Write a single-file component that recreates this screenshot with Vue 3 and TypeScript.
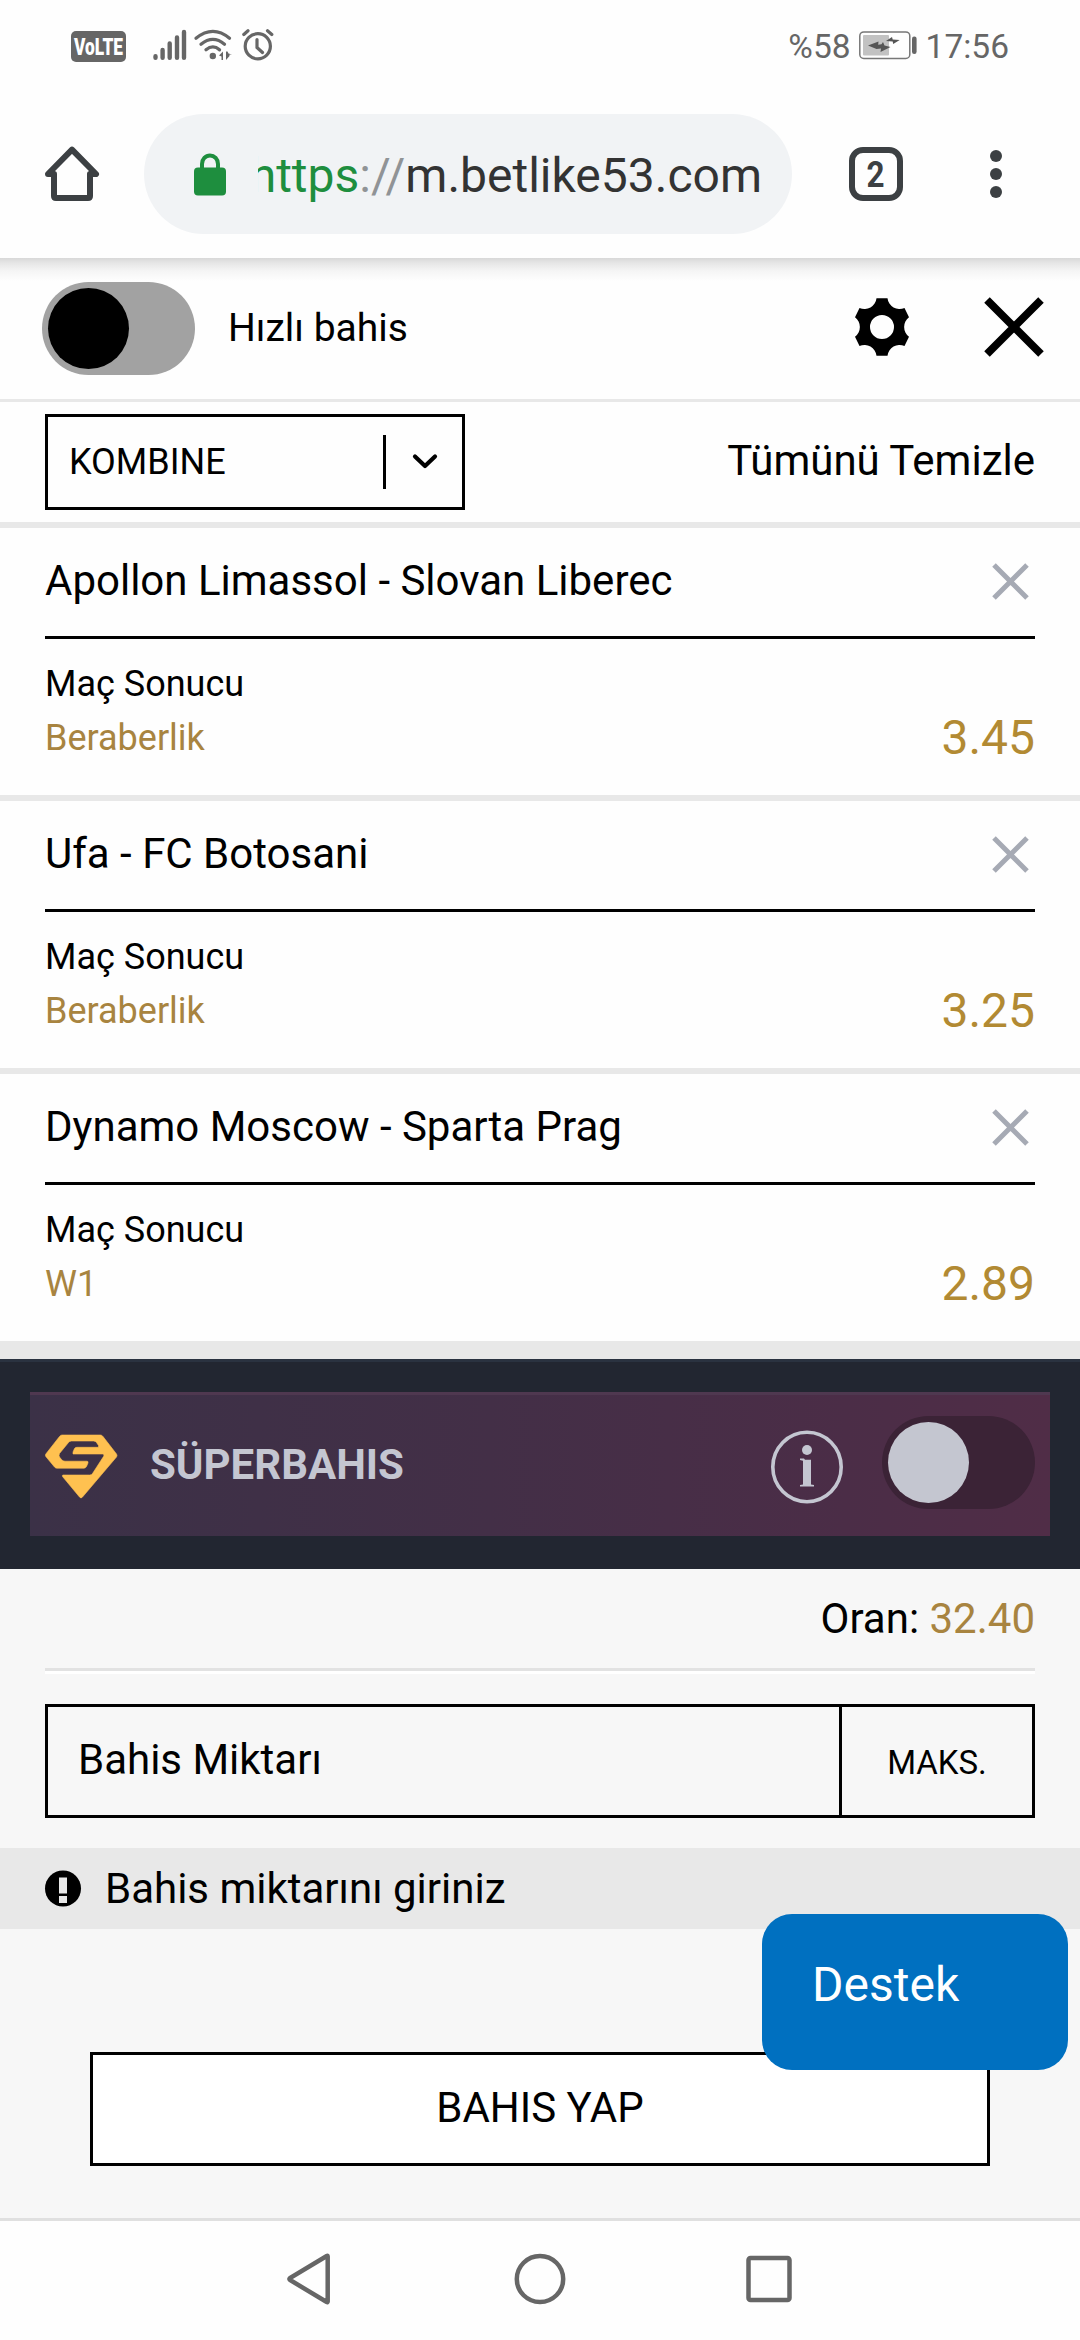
<script setup lang="ts">
import { ref } from 'vue'

interface Selection {
  match: string
  market: string
  pick: string
  odd: string
}

const selections = ref<Selection[]>([
  { match: 'Apollon Limassol - Slovan Liberec', market: 'Maç Sonucu', pick: 'Beraberlik', odd: '3.45' },
  { match: 'Ufa - FC Botosani', market: 'Maç Sonucu', pick: 'Beraberlik', odd: '3.25' },
  { match: 'Dynamo Moscow - Sparta Prag', market: 'Maç Sonucu', pick: 'W1', odd: '2.89' },
])
const totalOdds = ref('32.40')
</script>

<template>
  <div class="screen">
    <header class="status">
      <div class="status-left">
        <svg class="volte" width="55" height="31" viewBox="0 0 55 31">
          <rect width="55" height="31" rx="5" fill="#666" />
          <text x="3" y="23.5" textLength="49" lengthAdjust="spacingAndGlyphs" font-family="Roboto" font-weight="900" font-size="23" fill="#fff">VoLTE</text>
        </svg>
        <svg class="signal" width="34" height="32" viewBox="0 0 34 32" stroke="#666" stroke-width="4.4" stroke-linecap="round">
          <path d="M2.5 27.2v1.6M9.6 21v7.8M16.7 14.5v14.3M24 8.5v20.3M31 3v25.800" />
        </svg>
        <svg class="wifi" width="39" height="32" viewBox="0 0 39 32" fill="none" stroke="#666" stroke-width="3.300" stroke-linecap="round">
          <path d="M2 9.200Q19 -4.500 35.500 9.200M7 15.200Q19 5.500 30.500 15.200M12 20.800Q19 15 25.500 20.800" />
          <circle cx="18.800" cy="27" r="3.200" fill="#666" stroke="none" />
          <path d="M25 26.500l4-4v8.500h-1.500v-3.500zM38 25.500h-2.500v1.500l-3.500 4v-8.500h1.500l1 2z" fill="#666" stroke="none" />
        </svg>
        <svg class="alarm" width="32" height="32" viewBox="0 0 32 32" fill="none" stroke="#666" stroke-width="3.200" stroke-linecap="round">
          <circle cx="15.800" cy="17.300" r="12.600" />
          <path d="M1.800 5.500L6 1.800M29.800 5.500L25.500 1.800M15 10.500v8l5.500 5" />
        </svg>
      </div>
      <div class="status-right">
        <span class="percent">%58</span>
        <svg class="battery" width="58" height="29" viewBox="0 0 58 29">
          <rect x="0.800" y="0.900" width="50" height="26.500" rx="4" fill="none" stroke="#777" stroke-width="1.500" />
          <rect x="4" y="4" width="26" height="20.500" rx="1" fill="#c2c2c2" />
          <path d="M9 14.500l10.500-4-.3 3.200 3.300-.5 1.500-2.200 1.500 3.500 6 1.500-10 5 .5-3.500-4.500.5zM27 10l6-4 .7 2.500 7 .5-6.500 4-.5-2.500z" fill="#555" />
          <rect x="53" y="5.500" width="4.600" height="17.500" rx="2.200" fill="#666" />
        </svg>
        <span class="clock">17:56</span>
      </div>
    </header>

    <div class="browser">
      <svg class="home" width="54" height="56" viewBox="0 0 54 56" fill="none" stroke="#3c4043" stroke-width="6" stroke-linejoin="round" stroke-linecap="round">
        <path d="M3 28L27 3.700L51 28H45V50Q45 52 43 52H11Q9 52 9 50V28Z" />
      </svg>
      <div class="omnibox">
        <svg width="32" height="43" viewBox="0 0 32 43">
          <path d="M8 16V11a8 8.500 0 0 1 16 0v5" fill="none" stroke="#1e8e3e" stroke-width="4" />
          <rect y="14.500" width="32" height="28" rx="4" fill="#1e8e3e" />
        </svg>
        <div class="url"><span><i class="scheme">https</i><i class="sep">://</i>m.betlike53.com</span></div>
      </div>
      <div class="tabs"><span>2</span></div>
      <svg class="dots" width="12" height="48" viewBox="0 0 12 48" fill="#3c4043">
        <circle cx="6" cy="6" r="6" /><circle cx="6" cy="24" r="6" /><circle cx="6" cy="42" r="6" />
      </svg>
    </div>

    <section class="quick">
      <div class="toggle"><div class="knob"></div></div>
      <span class="quick-label">Hızlı bahis</span>
      <svg class="gear" width="56" height="58" viewBox="-28 -29 56 58">
        <path fill-rule="evenodd" d="M-5.500 -28.700H5.500A12.100 12.100 0 0 0 22.500 -19L27 -9.700A12.100 12.100 0 0 0 27 9.700L22.500 19A12.100 12.100 0 0 0 5.500 28.700H-5.500A12.100 12.100 0 0 0 -22.500 19L-27 9.700A12.100 12.100 0 0 0 -27 -9.700L-22.500 -19A12.100 12.100 0 0 0 -5.500 -28.700ZM-12 0a12 12 0 1 0 24 0a12 12 0 1 0 -24 0Z" />
      </svg>
      <svg class="close" width="60" height="60" viewBox="0 0 60 60" stroke="#000" stroke-width="7.800">
        <path d="M3 3L57 57M57 3L3 57" />
      </svg>
    </section>

    <section class="mode">
      <div class="select">
        <span class="select-text">KOMBINE</span>
        <span class="select-bar"></span>
        <svg width="26" height="18" viewBox="0 0 26 18" fill="none" stroke="#000" stroke-width="4.200" stroke-linecap="round" stroke-linejoin="round">
          <path d="M3 3.500L13 13L23 3.500" />
        </svg>
      </div>
      <span class="clear">Tümünü Temizle</span>
    </section>

    <article v-for="s in selections" :key="s.match" class="bet">
      <div class="bet-head">
        <span class="match">{{ s.match }}</span>
        <svg width="37" height="37" viewBox="0 0 37 37" stroke="#a6aab4" stroke-width="5">
          <path d="M2 2L35 35M35 2L2 35" />
        </svg>
      </div>
      <div class="bet-body">
        <div class="lines">
          <span class="market">{{ s.market }}</span>
          <span class="pick">{{ s.pick }}</span>
        </div>
        <span class="odd">{{ s.odd }}</span>
      </div>
    </article>

    <section class="super">
      <div class="super-panel">
        <svg class="logo" width="72" height="63" viewBox="45 1435 72 63" fill="#ffc150" stroke="#ffc150" stroke-width="0.600" stroke-linejoin="round">
          <path d="M62 1435H100.500Q102 1435 103 1436.500L116.500 1454Q117.500 1455.500 116.500 1457L82.500 1497Q81 1499 79.500 1497L62.500 1476.500Q62 1475 63 1475H89.500Q91.500 1475 92.500 1473.500L103.500 1456.500Q105 1454 102.500 1454H73V1452L74.500 1448.500Q75.300 1447.300 77 1447.300H98.500V1445.500L96.500 1442.500Q95.500 1441 93.500 1441H71.500Q69.500 1441 68.500 1442.500L59.500 1453.500Q58.500 1455.500 59.500 1457L61.500 1459.500Q62.700 1461.200 65 1461.200H87Q88.500 1461.200 88 1463L86.500 1466.500Q85.500 1468.200 84 1468.200H57Q55.500 1468.200 54.500 1467L45.800 1456.500Q45 1455 45.800 1454L59.500 1436.500Q60.500 1435 62 1435Z" />
        </svg>
        <span class="super-name">SÜPERBAHIS</span>
        <svg class="info" width="72" height="74" viewBox="0 0 72 74" fill="#c4c6d1">
          <ellipse cx="36" cy="37" rx="34.200" ry="34.700" fill="none" stroke="#c4c6d1" stroke-width="3.600" />
          <circle cx="36" cy="20" r="5" />
          <path d="M29 28.500h4l1 1.300h6V54.500l3 .5v1.500H29V55l3-.5V30.800l-3-.8z" />
        </svg>
        <div class="toggle dim"><div class="knob"></div></div>
      </div>
    </section>

    <section class="stake">
      <div class="total">Oran: <b>{{ totalOdds }}</b></div>
      <div class="amount">
        <div class="field">Bahis Miktarı</div>
        <div class="max"><span>MAKS.</span></div>
      </div>
    </section>

    <section class="notice">
      <svg width="36" height="37" viewBox="0 0 36 37">
        <circle cx="18" cy="18.500" r="18" />
        <path d="M14 7.500h8v16h-8zM14 26h8v7h-8z" fill="#e8e8e8" />
      </svg>
      <span>Bahis miktarını giriniz</span>
    </section>

    <section class="submit">
      <div class="place"><span>BAHIS YAP</span></div>
      <div class="support">Destek</div>
    </section>

    <nav class="nav">
      <svg width="46" height="52" viewBox="0 0 46 52"><path d="M39.700 3.500V48.500Q39.700 49.500 38.700 49L2 27Q1 26 2 25L38.700 3Q39.700 2.500 39.700 3.500Z" /></svg>
      <svg width="52" height="52" viewBox="0 0 52 52"><ellipse cx="26" cy="26" rx="23.200" ry="23" /></svg>
      <svg width="46" height="52" viewBox="0 0 46 52"><rect x="2.500" y="5" width="41" height="42" rx="2" /></svg>
    </nav>
  </div>
</template>

<style>
body {
  margin: 0;
  background: #fff;
}
</style>

<style scoped>
.screen {
  width: 1080px;
  height: 2340px;
  overflow: hidden;
  display: flex;
  flex-direction: column;
  background: #fefefe;
  color: #000;
  font-family: Roboto, "Liberation Sans", sans-serif;
  font-size: 42px;
  line-height: 50px;
}
.screen * {
  box-sizing: border-box;
  flex-shrink: 0;
}
span {
  white-space: nowrap;
}
svg {
  display: block;
  overflow: visible;
}
.status {
  height: 90px;
  padding: 0 71px;
  display: flex;
  justify-content: space-between;
  align-items: center;
  color: #666;
  font-size: 33.5px;
}
.status-left,
.status-right {
  display: flex;
  align-items: center;
}
.volte {
  margin-top: 2px;
}
.signal {
  margin-left: 27px;
}
.wifi {
  margin-left: 7px;
}
.alarm {
  margin-left: 9px;
}
.battery {
  margin: 1px 9px 0 8px;
}
.clock,
.percent {
  padding-top: 3px;
}
.browser {
  height: 168px;
  padding: 0 78px 0 45px;
  display: flex;
  align-items: center;
}
.omnibox {
  width: 648px;
  height: 120px;
  margin-left: 45px;
  padding: 0 30px 0 50px;
  display: flex;
  align-items: center;
  border-radius: 60px;
  background: #f1f3f5;
}
.url {
  width: 504px;
  margin-left: 32px;
  padding-top: 3px;
  display: flex;
  justify-content: flex-end;
  overflow: hidden;
  color: #333;
  font-size: 48px;
  line-height: 64px;
}
.url i {
  font-style: normal;
}
.scheme {
  color: #1e8e3e;
}
.sep {
  color: #909396;
}
.tabs {
  width: 54px;
  height: 54px;
  margin-left: 57px;
  border: 6px solid #3c4043;
  border-radius: 14px;
  color: #3c4043;
  font: bold 37px/43px Roboto, sans-serif;
  text-align: center;
}
.tabs span {
  display: inline-block;
  transform: scaleX(0.85);
}
.dots {
  margin-left: 87px;
}
.quick {
  height: 144px;
  padding: 0 36px 3px 42px;
  display: flex;
  align-items: center;
  border-bottom: 3px solid #e8e8e8;
  background: linear-gradient(#d8d8d8, #e6e6e6 5px, #f5f5f5 13px, #fefefe 23px);
  font-size: 39px;
}
.toggle {
  width: 153px;
  height: 93px;
  padding: 6px;
  border-radius: 47px;
  background: #a2a2a2;
}
.quick .toggle {
  margin-top: 3px;
}
.knob {
  width: 81px;
  height: 81px;
  border-radius: 50%;
  background: #000;
}
.quick-label {
  flex: 1;
  margin-left: 33px;
  padding-top: 2px;
}
.close {
  margin-left: 74px;
}
.mode {
  height: 126px;
  padding: 12px 45px;
  display: flex;
  justify-content: space-between;
  border-bottom: 6px solid #e8e8e8;
}
.select {
  width: 420px;
  height: 96px;
  padding: 0 24px 0 21px;
  display: flex;
  align-items: center;
  border: 3px solid #000;
  font-size: 36px;
}
.select-text {
  flex: 1;
}
.select-bar {
  width: 3px;
  height: 54px;
  margin-right: 26px;
  background: #000;
}
.clear {
  line-height: 94px;
}
.bet {
  height: 273px;
  padding: 0 45px;
  border-bottom: 6px solid #e8e8e8;
}
.bet:nth-of-type(3) {
  height: 285px;
  border-bottom-width: 18px;
}
.bet-head {
  height: 111px;
  padding: 0 6px 2px 0;
  display: flex;
  align-items: center;
  justify-content: space-between;
  border-bottom: 3px solid #000;
}
.bet-body {
  padding-top: 18px;
  display: flex;
  justify-content: space-between;
  align-items: flex-end;
  font-size: 36px;
  line-height: 54px;
}
.lines {
  display: flex;
  flex-direction: column;
}
.pick,
.total b {
  color: #a88440;
}
.odd {
  color: #b28a33;
  font-size: 48px;
}
.super {
  height: 210px;
  padding: 30px;
  border-top: 3px solid #2a3240;
  background: #222631;
}
.super-panel {
  height: 144px;
  padding: 0 15px 6px;
  display: flex;
  align-items: center;
  border-top: 3px solid #4f3850;
  background: linear-gradient(90deg, #3b3147, #432f47 45%, #4b2d47 80%, #502d47) border-box;
  color: #c4c6d1;
}
.super-name {
  flex: 1;
  margin-left: 33px;
  padding-top: 5px;
  font-weight: bold;
}
.logo,
.info {
  margin-top: 8px;
}
.dim {
  margin-left: 39px;
  background: #3b2336;
}
.dim .knob {
  background: #c4c6d0;
}
.stake {
  height: 279px;
  padding: 0 45px;
  background: #f7f7f7;
}
.total {
  height: 102px;
  line-height: 99px;
  text-align: right;
  border-bottom: 3px solid #e2e2e2;
  box-shadow: 0 3px #fff;
}
.total b {
  font-weight: normal;
}
.amount {
  height: 114px;
  margin-top: 33px;
  display: flex;
  border: 3px solid #000;
}
.field {
  flex: 1;
  padding-left: 30px;
  line-height: 105px;
}
.max {
  width: 193px;
  border-left: 3px solid #000;
  text-align: center;
  font-size: 33px;
  line-height: 111px;
}
.notice {
  height: 81px;
  padding-left: 45px;
  display: flex;
  align-items: center;
  gap: 24px;
  background: #e8e8e8;
}
.submit {
  position: relative;
  height: 289px;
  padding: 123px 90px 0;
  background: #f7f7f7;
}
.place {
  height: 114px;
  border: 3px solid #000;
  background: #fff;
  text-align: center;
  line-height: 105px;
}
.support {
  position: absolute;
  top: -15px;
  right: 12px;
  width: 306px;
  height: 156px;
  padding-left: 50px;
  border-radius: 30px;
  background: #0070c0;
  color: #fff;
  font-size: 48px;
  line-height: 141px;
}
.nav {
  height: 122px;
  padding: 0 288px 4px;
  display: flex;
  align-items: center;
  justify-content: space-between;
  border-top: 3px solid #e0e0e0;
}
.nav svg {
  fill: none;
  stroke: #666;
  stroke-width: 4.500;
}
</style>
